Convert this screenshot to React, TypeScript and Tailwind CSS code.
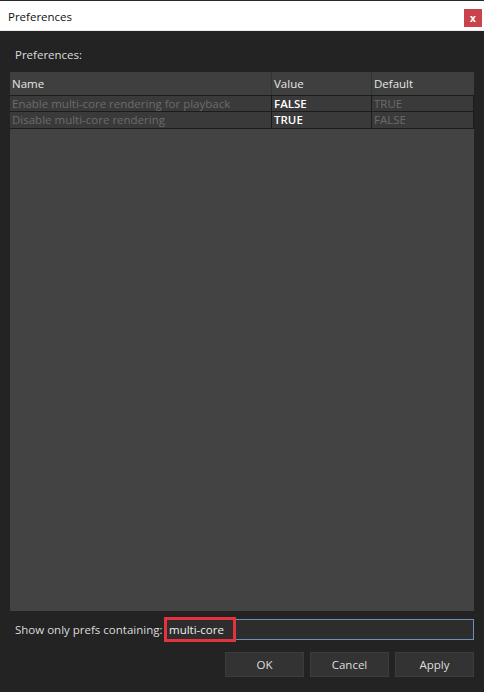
import React from "react";

const rows = [
  { name: "Enable multi-core rendering for playback", value: "FALSE", def: "TRUE" },
  { name: "Disable multi-core rendering", value: "TRUE", def: "FALSE" },
];

export default function App() {
  return (
    <div
      className="w-[484px] h-[692px] flex flex-col bg-[#232323] overflow-hidden text-[11.5px]"
      style={{ fontFamily: '"Open Sans", "Noto Sans", sans-serif' }}
    >
      <div className="h-[1px] bg-[#2a2a2a]" />
      <div className="h-[30px] bg-white flex items-start relative border-b border-[#e9e9e9]">
        <span className="ml-[8px] mt-[8px] text-[11.5px] leading-[16px] text-[#111]">Preferences</span>
        <div className="absolute right-[2px] top-[8px] w-[18px] h-[18px] bg-[#c9444a] flex items-center justify-center text-white text-[10px] font-bold leading-none">
          x
        </div>
      </div>
      <div className="flex-1 flex flex-col px-[10px] pt-[17px] pb-[15px]">
        <div className="pl-[5px] h-[14px] leading-[14px] text-[#dcdcdc]">Preferences:</div>
        <div className="mt-[10px] flex-1 bg-[#434343] flex flex-col">
          <div className="h-[23px] bg-[#3f3f3f] flex text-[#e6e6e6]">
            <div className="w-[262px] pl-[2px] flex items-center border-r border-[#333]">Name</div>
            <div className="w-[100px] pl-[2px] flex items-center border-r border-[#333]">Value</div>
            <div className="flex-1 pl-[2px] flex items-center">Default</div>
          </div>
          {rows.map((r, i) => (
            <div
              key={i}
              className={`h-[17px] flex bg-[#3a3a3a] border-b border-[#1c1c1c] ${i === 0 ? "border-t" : ""} border-r`}
            >
              <div className="w-[262px] pl-[2px] flex items-center border-r border-[#1c1c1c] text-[#6b6b6b] leading-none">
                {r.name}
              </div>
              <div className="w-[100px] pl-[2px] flex items-center border-r border-[#1c1c1c] text-white font-semibold leading-none">
                {r.value}
              </div>
              <div className="flex-1 pl-[2px] flex items-center text-[#6b6b6b] leading-none">{r.def}</div>
            </div>
          ))}
        </div>
        <div className="mt-[6px] h-[25px] flex items-center">
          <span className="pl-[5px] text-[#dcdcdc] w-[155px] shrink-0 whitespace-nowrap">Show only prefs containing:</span>
          <div className="flex-1 h-[21px] border border-[#6d8fb8] bg-[#2d2d2d] relative flex items-center">
            <div className="absolute left-[-2px] top-[-3px] w-[72px] h-[25px] border-[3px] border-[#e3333e]" />
            <span className="pl-[3px] text-[#f0f0f0]">multi-core</span>
          </div>
        </div>
        <div className="mt-[10px] h-[25px] flex justify-end gap-[6px]">
          {["OK", "Cancel", "Apply"].map((b) => (
            <div
              key={b}
              className="w-[79px] h-[25px] bg-[#333333] border border-[#3c3c3c] flex items-center justify-center text-[#dedede]"
            >
              {b}
            </div>
          ))}
        </div>
      </div>
    </div>
  );
}
